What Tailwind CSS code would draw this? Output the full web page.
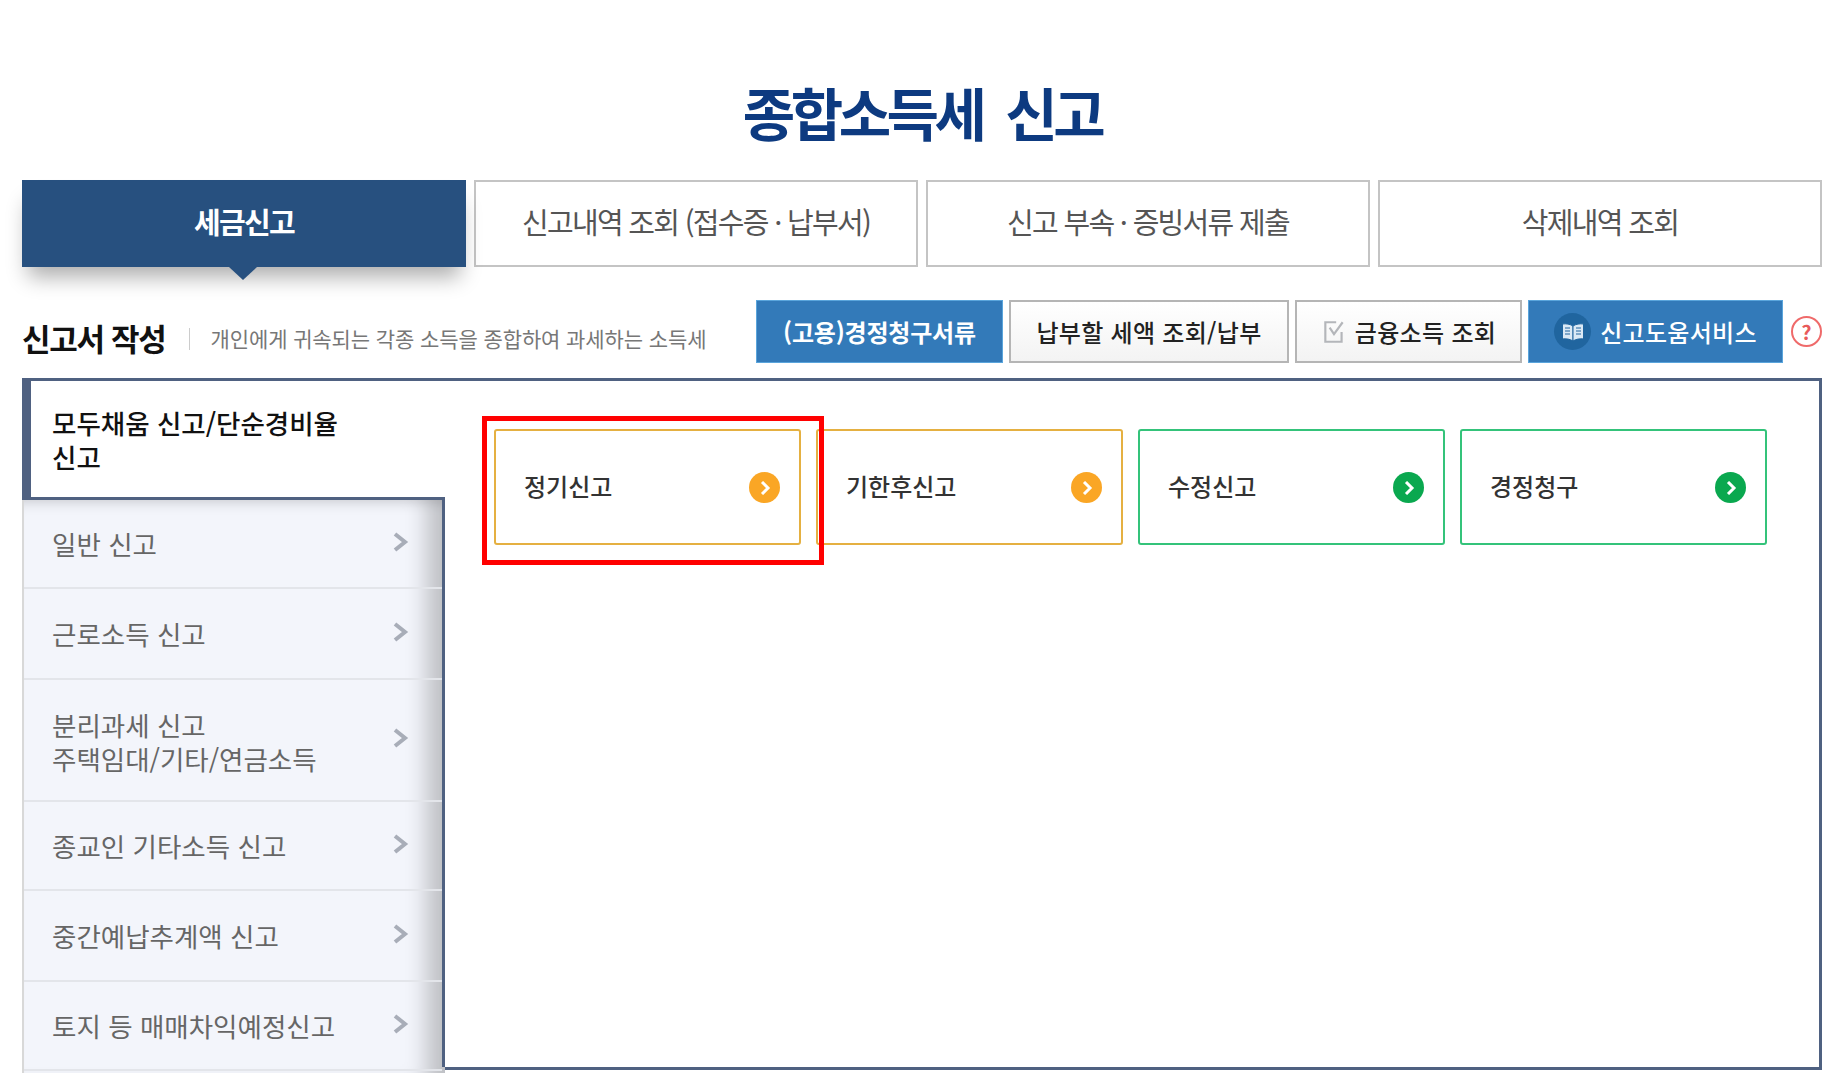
<!DOCTYPE html>
<html lang="ko">
<head>
    <meta charset="UTF-8">
    <title>종합소득세 신고</title>
    <script src="https://cdn.jsdelivr.net/npm/@tailwindcss/browser@4"></script>
</head>
<body class="bg-white h-[1073px] overflow-hidden font-['Noto_Sans_CJK_KR','Noto_Sans',sans-serif]">
    <div class="w-[1800px] ml-[22px]">
        <!-- Title -->
        <h1 class="h-[180px] pt-[76px] text-center text-[57px] leading-[70px] font-bold tracking-[-4.5px] text-[#0d3a80]">종합소득세&nbsp; 신고</h1>

        <!-- Tabs -->
        <div class="grid grid-cols-4 gap-2 h-[87px] text-[29px] tracking-[-1.7px] text-[#555]">
            <div class="relative flex items-center justify-center pb-[4px] bg-[#27507f] text-white font-bold shadow-[0_16px_20px_-6px_rgba(0,0,0,0.32)]">
                세금신고
                <span class="absolute left-[207px] top-full border-x-[14px] border-x-transparent border-t-[13px] border-t-[#27507f]"></span>
            </div>
            <div class="flex items-center justify-center pb-[4px] bg-white border-2 border-[#c4c4c4]">신고내역 조회 (접수증 · 납부서)</div>
            <div class="flex items-center justify-center pb-[4px] bg-white border-2 border-[#c4c4c4]">신고 부속 · 증빙서류 제출</div>
            <div class="flex items-center justify-center pb-[4px] bg-white border-2 border-[#c4c4c4]">삭제내역 조회</div>
        </div>

        <!-- Toolbar -->
        <div class="flex items-start h-[111px] pt-[33px]">
            <div class="flex items-center h-[63px] pt-[14px]">
                <h2 class="text-[31px] font-bold tracking-[-1.3px] text-[#111]">신고서 작성</h2>
                <span class="w-px h-[22px] bg-[#ccc] ml-[24px] mr-[20px]"></span>
                <p class="text-[21px] tracking-[-0.1px] text-[#777]">개인에게 귀속되는 각종 소득을 종합하여 과세하는 소득세</p>
            </div>
            <div class="ml-auto flex items-center gap-[6px] text-[24px] font-medium tracking-[0.3px]">
                <a class="flex items-center justify-center w-[247px] h-[63px] bg-[#337ab9] border border-[#5aa5dc] text-white font-bold tracking-[-0.2px]">(고용)경정청구서류</a>
                <a class="flex items-center justify-center w-[280px] h-[63px] bg-gradient-to-b from-white to-[#f3f3f3] border-2 border-[#b5b5b5] text-[#222]">납부할 세액 조회/납부</a>
                <a class="flex items-center justify-center gap-[8px] w-[227px] h-[63px] bg-gradient-to-b from-white to-[#f3f3f3] border-2 border-[#b5b5b5] text-[#222]">
                    <svg class="w-[26px] h-[26px]" viewBox="0 0 24 24" fill="none" stroke="#b4b6ba" stroke-width="2"><path d="M14 3H4v18h15v-9"/><path d="M8 8l4 6 8-11"/></svg>
                    금융소득 조회
                </a>
                <a class="flex items-center justify-center gap-[9px] w-[255px] h-[63px] bg-[#337ab9] border border-[#5aa5dc] text-white">
                    <span class="flex items-center justify-center w-[37px] h-[37px] rounded-full bg-[#20659f]">
                        <svg class="w-[24px] h-[20px]" viewBox="0 0 24 20" fill="#dbe9f5" stroke="#20659f" stroke-width="1"><path d="M12 4C9 2 5 1.500 1.500 2v15c3.500-.5 7.500 0 10.500 2z"/><path d="M12 4c3-2 7-2.500 10.500-2v15c-3.500-.5-7.500 0-10.500 2z"/><path d="M4 6h5M4 9h5M4 12h5M15 6h5M15 9h5M15 12h5" fill="none"/></svg>
                    </span>
                    신고도움서비스
                </a>
                <span class="flex items-center justify-center w-[31px] h-[31px] ml-[2px] rounded-full border-2 border-[#ef6a6a] text-[#e85a5a] text-[20px] font-bold leading-none">?</span>
            </div>
        </div>

        <!-- Panel -->
        <div class="flex h-[695px] border-t-[3px] border-[#4f6181]">
            <aside class="w-[423px] shrink-0 flex flex-col">
                <div class="h-[119px] flex items-center pt-[2px] bg-white border-l-[9px] border-b-[3px] border-[#4f6181] pl-[21px] text-[26.500px] leading-[34px] font-medium text-[#111]"><span>모두채움 신고/단순경비율<br>신고</span></div>
                <ul class="relative flex-1 bg-[#f3f5fb] border-l-2 border-l-[#d8d8d8] pr-[3px] text-[26.500px] leading-[34px] text-[#666] shadow-[inset_-34px_0_22px_-16px_rgba(0,0,0,0.22),inset_0_14px_14px_-12px_rgba(0,0,0,0.16)] before:absolute before:right-0 before:top-0 before:w-[3px] before:h-[567px] before:bg-[#4f6181]">
                    <li class="h-[89px] flex items-center justify-between pl-[28px] pr-[33px] border-b-2 border-[#e3e5ea]">일반 신고
                        <svg class="w-[16px] h-[20px] mb-[4px]" viewBox="0 0 16 20" fill="none" stroke="#a8adb8" stroke-width="4"><path d="M2 2l10 8-10 8"/></svg></li>
                    <li class="h-[91px] flex items-center justify-between pl-[28px] pr-[33px] border-b-2 border-[#e3e5ea]">근로소득 신고
                        <svg class="w-[16px] h-[20px] mb-[4px]" viewBox="0 0 16 20" fill="none" stroke="#a8adb8" stroke-width="4"><path d="M2 2l10 8-10 8"/></svg></li>
                    <li class="h-[122px] flex items-center justify-between pl-[28px] pr-[33px] pt-[4px] border-b-2 border-[#e3e5ea]"><span>분리과세 신고<br>주택임대/기타/연금소득</span>
                        <svg class="w-[16px] h-[20px] mb-[8px]" viewBox="0 0 16 20" fill="none" stroke="#a8adb8" stroke-width="4"><path d="M2 2l10 8-10 8"/></svg></li>
                    <li class="h-[89px] flex items-center justify-between pl-[28px] pr-[33px] border-b-2 border-[#e3e5ea]">종교인 기타소득 신고
                        <svg class="w-[16px] h-[20px] mb-[4px]" viewBox="0 0 16 20" fill="none" stroke="#a8adb8" stroke-width="4"><path d="M2 2l10 8-10 8"/></svg></li>
                    <li class="h-[91px] flex items-center justify-between pl-[28px] pr-[33px] border-b-2 border-[#e3e5ea]">중간예납추계액 신고
                        <svg class="w-[16px] h-[20px] mb-[4px]" viewBox="0 0 16 20" fill="none" stroke="#a8adb8" stroke-width="4"><path d="M2 2l10 8-10 8"/></svg></li>
                    <li class="h-[89px] flex items-center justify-between pl-[28px] pr-[33px] border-b-2 border-[#e3e5ea]">토지 등 매매차익예정신고
                        <svg class="w-[16px] h-[20px] mb-[4px]" viewBox="0 0 16 20" fill="none" stroke="#a8adb8" stroke-width="4"><path d="M2 2l10 8-10 8"/></svg></li>
                </ul>
            </aside>
            <main class="flex-1 h-[689px] border-r-[3px] border-b-[3px] border-[#4f6181] pl-[49px] pt-[48px]">
                <div class="flex gap-[15px] text-[24px] font-medium text-[#333]">
                    <a class="relative flex items-center justify-between w-[307px] h-[116px] pl-[28px] pr-[19px] pb-[2px] rounded-[3px] border-2 border-[#e5b041]">정기신고
                        <span class="flex items-center justify-center w-[31px] h-[31px] mt-[3px] rounded-full bg-[#faa625]"><svg class="w-[12px] h-[14px]" viewBox="0 0 12 14" fill="none" stroke="#fff" stroke-width="3"><path d="M3 1l6 6-6 6"/></svg></span>
                        <span class="absolute z-10 left-[-14px] top-[-15px] w-[342px] h-[149px] border-[5px] border-[#ff0000]"></span>
                    </a>
                    <a class="flex items-center justify-between w-[307px] h-[116px] pl-[28px] pr-[19px] pb-[2px] rounded-[3px] border-2 border-[#e5b041]">기한후신고
                        <span class="flex items-center justify-center w-[31px] h-[31px] mt-[3px] rounded-full bg-[#faa625]"><svg class="w-[12px] h-[14px]" viewBox="0 0 12 14" fill="none" stroke="#fff" stroke-width="3"><path d="M3 1l6 6-6 6"/></svg></span>
                    </a>
                    <a class="flex items-center justify-between w-[307px] h-[116px] pl-[28px] pr-[19px] pb-[2px] rounded-[3px] border-2 border-[#34c37a]">수정신고
                        <span class="flex items-center justify-center w-[31px] h-[31px] mt-[3px] rounded-full bg-[#0aa84f]"><svg class="w-[12px] h-[14px]" viewBox="0 0 12 14" fill="none" stroke="#fff" stroke-width="3"><path d="M3 1l6 6-6 6"/></svg></span>
                    </a>
                    <a class="flex items-center justify-between w-[307px] h-[116px] pl-[28px] pr-[19px] pb-[2px] rounded-[3px] border-2 border-[#34c37a]">경정청구
                        <span class="flex items-center justify-center w-[31px] h-[31px] mt-[3px] rounded-full bg-[#0aa84f]"><svg class="w-[12px] h-[14px]" viewBox="0 0 12 14" fill="none" stroke="#fff" stroke-width="3"><path d="M3 1l6 6-6 6"/></svg></span>
                    </a>
                </div>
            </main>
        </div>
    </div>
</body>
</html>
